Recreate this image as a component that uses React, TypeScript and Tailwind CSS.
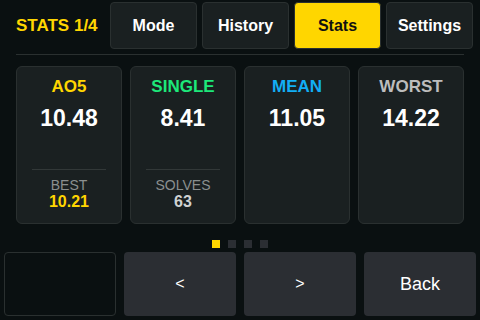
import React from "react";

type Stat = {
  label: string;
  color: string;
  value: string;
  sub?: { label: string; value: string; color: string };
};

const stats: Stat[] = [
  { label: "AO5", color: "text-[#ffd600]", value: "10.48", sub: { label: "BEST", value: "10.21", color: "text-[#ffd600]" } },
  { label: "SINGLE", color: "text-[#1de87a]", value: "8.41", sub: { label: "SOLVES", value: "63", color: "text-[#cfd2d2]" } },
  { label: "MEAN", color: "text-[#12aef5]", value: "11.05" },
  { label: "WORST", color: "text-[#bdbdbd]", value: "14.22" },
];

const tabs = ["Mode", "History", "Stats", "Settings"];

function StatCard({ stat }: { stat: Stat }) {
  return (
    <div className="w-[106px] h-[158px] rounded-[6px] border border-[#2a3030] bg-[#1a2021] flex flex-col items-center pt-[10px] pb-[12px]">
      <div className={`text-[17px] leading-[20px] font-bold ${stat.color}`}>{stat.label}</div>
      <div className="mt-[7px] text-[23px] leading-[28px] font-bold text-white">{stat.value}</div>
      <div className="flex-1" />
      {stat.sub && (
        <div className="w-full flex flex-col items-center">
          <div className="w-[74px] h-px bg-[#323838]" />
          <div className="mt-[7px] text-[14px] leading-[16px] text-[#8a8f8f]">{stat.sub.label}</div>
          <div className={`text-[16px] leading-[18px] font-bold ${stat.sub.color}`}>{stat.sub.value}</div>
        </div>
      )}
    </div>
  );
}

export default function App() {
  return (
    <div className="w-[480px] h-[320px] bg-[#0a1011] flex flex-col overflow-hidden font-['Liberation_Sans',Arial,sans-serif]">
      {/* Header */}
      <div className="flex items-stretch gap-[5px] pt-[2px] pl-4 h-[49px]">
        <div className="flex-1 flex items-center text-[17px] font-bold text-[#ffd600]">STATS 1/4</div>
        <div className="flex gap-[5px] pr-[7px]">
          {tabs.map((t) => (
            <div
              key={t}
              className={
                t === "Stats"
                  ? "w-[87px] h-[47px] rounded-[4px] border border-[#2a3030] bg-[#ffd600] flex items-center justify-center text-[16px] font-bold text-[#111]"
                  : "w-[87px] h-[47px] rounded-[4px] border border-[#2a3030] bg-[#1a2021] flex items-center justify-center text-[16px] font-bold text-white"
              }
            >
              {t}
            </div>
          ))}
        </div>
      </div>

      <div className="mx-4 mt-[5px] h-px bg-[#2a3030]" />

      {/* Stat cards */}
      <div className="mt-[11px] px-4 flex gap-2">
        {stats.map((s) => (
          <StatCard key={s.label} stat={s} />
        ))}
      </div>

      {/* Page dots */}
      <div className="mt-[16px] flex justify-center gap-2">
        <div className="w-2 h-2 bg-[#ffd600]" />
        <div className="w-2 h-2 bg-[#2b2e33]" />
        <div className="w-2 h-2 bg-[#2b2e33]" />
        <div className="w-2 h-2 bg-[#2b2e33]" />
      </div>

      {/* Bottom buttons */}
      <div className="mt-[4px] px-1 flex gap-2">
        <div className="w-[112px] h-[64px] rounded-[4px] border border-[#2a3030]" />
        <div className="w-[112px] h-[64px] rounded-[4px] bg-[#2b2e33] flex items-center justify-center text-[16px] text-white">&lt;</div>
        <div className="w-[112px] h-[64px] rounded-[4px] bg-[#2b2e33] flex items-center justify-center text-[16px] text-white">&gt;</div>
        <div className="w-[112px] h-[64px] rounded-[4px] bg-[#2b2e33] flex items-center justify-center text-[18px] text-white">Back</div>
      </div>
    </div>
  );
}
